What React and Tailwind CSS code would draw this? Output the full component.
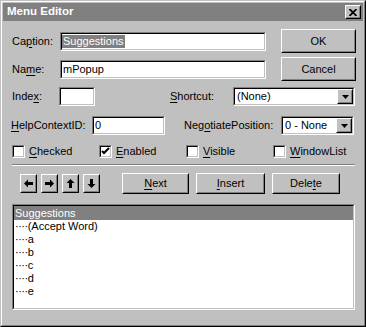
import React from 'react';

const Sunken = ({ className = '', children }) => (
  <div className={`border border-t-[#808080] border-l-[#808080] border-b-white border-r-white ${className}`}>
    <div className="w-full h-full border border-t-black border-l-black border-b-[#c0c0c0] border-r-[#c0c0c0] bg-white overflow-hidden">
      {children}
    </div>
  </div>
);

const Raised = ({ className = '', children }) => (
  <div className={`border border-t-white border-l-white border-b-black border-r-black ${className}`}>
    <div className="w-full h-full border border-t-[#c0c0c0] border-l-[#c0c0c0] border-b-[#808080] border-r-[#808080] bg-[#c0c0c0] flex items-center justify-center">
      {children}
    </div>
  </div>
);

const U = ({ children }) => <span className="underline underline-offset-[2px]">{children}</span>;

const DropArrow = () => (
  <Raised className="w-[16px] h-full">
    <svg width="7" height="4" viewBox="0 0 7 4">
      <polygon points="0,0 7,0 3.5,4" fill="black" />
    </svg>
  </Raised>
);

const Select = ({ className, value }) => (
  <Sunken className={className}>
    <div className="flex h-full items-center">
      <span className="flex-1 pl-[2px] leading-none">{value}</span>
      <DropArrow />
    </div>
  </Sunken>
);

const Checkbox = ({ checked, label }) => (
  <div className="flex items-center gap-[4px]">
    <Sunken className="w-[13px] h-[13px]">
      {checked && (
        <svg width="9" height="9" viewBox="0 0 9 9" className="block">
          <path d="M1 4 L3 6 L8 1" stroke="black" strokeWidth="2" fill="none" />
        </svg>
      )}
    </Sunken>
    <span>{label}</span>
  </div>
);

const Arrow = ({ dir }) => {
  const rot = { left: 0, right: 180, up: 90, down: 270 }[dir];
  return (
    <Raised className="w-[17px] h-[19px]">
      <svg width="9" height="9" viewBox="0 0 9 9" style={{ transform: `rotate(${rot}deg)` }}>
        <polygon points="0,4.5 4,0.5 4,8.5" fill="black" />
        <rect x="4" y="3" width="5" height="3" fill="black" />
      </svg>
    </Raised>
  );
};

export default function App() {
  const items = ['(Accept Word)', 'a', 'b', 'c', 'd', 'e'];

  return (
    <div className="w-[366px] h-[327px] bg-[#c0c0c0] border border-t-[#c0c0c0] border-l-[#c0c0c0] border-b-black border-r-black font-['Liberation_Sans',Arial,sans-serif] text-[11px] text-black leading-none">
      <div className="h-full border border-t-white border-l-white border-b-[#808080] border-r-[#808080] p-px flex flex-col">
        {/* Title bar */}
        <div className="h-[18px] bg-[#808080] flex items-center justify-between pl-[4px] pr-[2px]">
          <span className="text-white font-bold text-[11.5px]">Menu Editor</span>
          <Raised className="w-[16px] h-[14px]">
            <svg width="8" height="7" viewBox="0 0 8 7">
              <path d="M0.5 0 L7.5 7 M7.5 0 L0.5 7" stroke="black" strokeWidth="1.8" />
            </svg>
          </Raised>
        </div>

        {/* Body */}
        <div className="pl-[9px] flex flex-col">
          <div className="mt-[8px] h-[24px] flex items-center">
            <span className="w-[48px]">Ca<U>p</U>tion:</span>
            <Sunken className="w-[206px] h-[19px]">
              <div className="h-full flex items-center">
                <span className="bg-[#808080] text-white px-px py-[1px]">Suggestions</span>
              </div>
            </Sunken>
            <Raised className="ml-[15px] w-[75px] h-[24px]">OK</Raised>
          </div>

          <div className="mt-[4px] h-[24px] flex items-center">
            <span className="w-[48px]">Na<U>m</U>e:</span>
            <Sunken className="w-[206px] h-[19px]">
              <div className="h-full flex items-center pl-[1px]">mPopup</div>
            </Sunken>
            <Raised className="ml-[15px] w-[75px] h-[24px]">Cancel</Raised>
          </div>

          <div className="mt-[6px] h-[19px] flex items-center">
            <span className="w-[47px]">Inde<U>x</U>:</span>
            <Sunken className="w-[36px] h-[19px]" />
            <span className="ml-[75px] w-[63px]"><U>S</U>hortcut:</span>
            <Select className="w-[122px] h-[19px]" value="(None)" />
          </div>

          <div className="mt-[10px] h-[19px] flex items-center">
            <span className="w-[81px] -ml-px pr-[1px]"><U>H</U>elpContextID:</span>
            <Sunken className="w-[73px] h-[19px]">
              <div className="h-full flex items-center pl-[1px]">0</div>
            </Sunken>
            <span className="ml-[19px] w-[97px]">Neg<U>o</U>tiatePosition:</span>
            <Select className="w-[73px] h-[19px]" value="0 - None" />
          </div>

          <div className="mt-[10px] h-[13px] flex items-center">
            <div className="w-[87px]"><Checkbox label={<><U>C</U>hecked</>} /></div>
            <div className="w-[87px]"><Checkbox checked label={<><U>E</U>nabled</>} /></div>
            <div className="w-[87px]"><Checkbox label={<><U>V</U>isible</>} /></div>
            <div><Checkbox label={<><U>W</U>indowList</>} /></div>
          </div>

          <div className="mt-[6px] w-[343px] h-[2px] border-t border-t-[#808080] border-b border-b-white" />

          <div className="mt-[7px] h-[21px] flex items-center">
            <div className="ml-[8px] flex gap-[4px]">
              <Arrow dir="left" />
              <Arrow dir="right" />
              <Arrow dir="up" />
              <Arrow dir="down" />
            </div>
            <Raised className="ml-[22px] w-[67px] h-[21px]"><span><U>N</U>ext</span></Raised>
            <Raised className="ml-[7px] w-[69px] h-[21px]"><span><U>I</U>nsert</span></Raised>
            <Raised className="ml-[7px] w-[68px] h-[21px]"><span>Dele<U>t</U>e</span></Raised>
          </div>

          <Sunken className="mt-[10px] w-[343px] h-[106px]">
            <div className="h-[14px] bg-[#808080] text-white flex items-center pl-px">Suggestions</div>
            {items.map((it) => (
              <div key={it} className="h-[13px] flex items-center pl-px">
                <span className="tracking-[-0.5px]">····</span>
                <span>{it}</span>
              </div>
            ))}
          </Sunken>
        </div>
      </div>
    </div>
  );
}
